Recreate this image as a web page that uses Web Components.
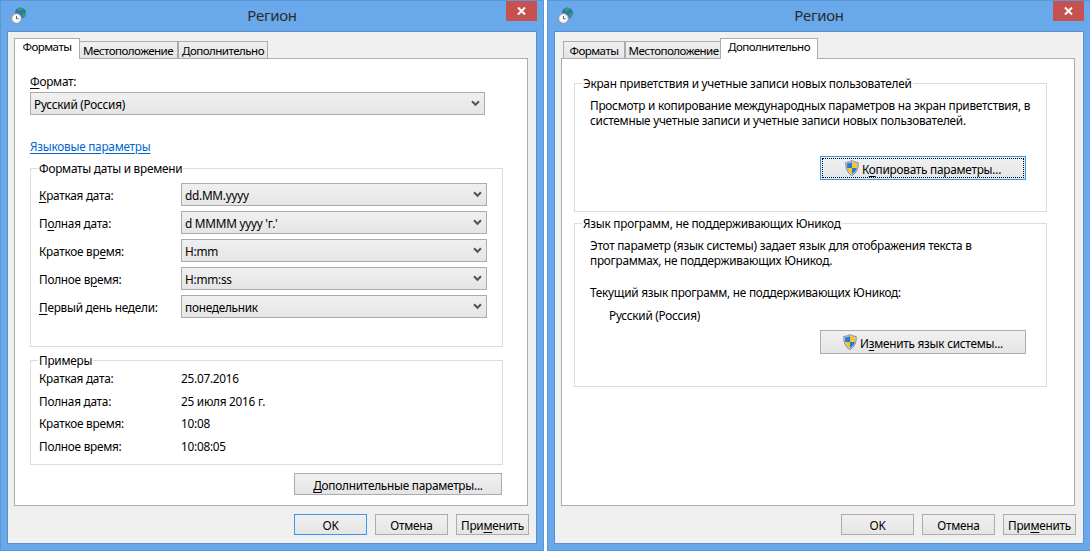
<!DOCTYPE html>
<html lang="ru">
<head>
<meta charset="utf-8">
<title>Регион</title>
<style>
  html, body { margin: 0; height: 551px; overflow: hidden; background: #fff; }
  body { font: 11.8px/16px "Noto Sans", "Open Sans", sans-serif; color: #000; letter-spacing: -0.25px; }
  #desk { display: flex; gap: 3px; width: 1091px; }
  .tight { line-height: 15px; white-space: nowrap; }
  u { text-underline-offset: 2px; }
</style>
</head>
<body>
<div id="desk">

  <region-window>
    <tab-strip slot="tabs">
      <tab-item active style="--w:62px">Форматы</tab-item>
      <tab-item style="--w:100px">Местоположение</tab-item>
      <tab-item style="--w:90px">Дополнительно</tab-item>
    </tab-strip>

    <tab-page style="--pad:14px 24px 0 15px">
      <field-label><u>Ф</u>ормат:</field-label>
      <combo-box style="margin:3px 18px 0 0">Русский (Россия)</combo-box>
      <link-label style="margin-top:22px">Языковые параметры</link-label>

      <group-box style="margin-top:6px">
        <span slot="legend">Форматы даты и времени</span>
        <form-grid style="--pad:7px 15px 28px 8px;--gap:5px;--row:23px">
          <field-label><u>К</u>раткая дата:</field-label><combo-box>dd.MM.yyyy</combo-box>
          <field-label>П<u>о</u>лная дата:</field-label><combo-box>d MMMM yyyy 'г.'</combo-box>
          <field-label>Краткое вр<u>е</u>мя:</field-label><combo-box>H:mm</combo-box>
          <field-label>Полное в<u>р</u>емя:</field-label><combo-box>H:mm:ss</combo-box>
          <field-label><u>П</u>ервый день недели:</field-label><combo-box>понедельник</combo-box>
        </form-grid>
      </group-box>

      <group-box style="margin-top:5px">
        <span slot="legend">Примеры</span>
        <form-grid style="--pad:0 15px 7px 8px;--gap:0;--row:22.5px;margin-top:-1px">
          <field-label>Краткая дата:</field-label><field-label>25.07.2016</field-label>
          <field-label>Полная дата:</field-label><field-label>25 июля 2016 г.</field-label>
          <field-label>Краткое время:</field-label><field-label>10:08</field-label>
          <field-label>Полное время:</field-label><field-label>10:08:05</field-label>
        </form-grid>
      </group-box>

      <button-row style="margin-top:8px;--end:1px">
        <win-button style="--w:208px;--h:22px"><u>Д</u>ополнительные параметры...</win-button>
      </button-row>
    </tab-page>

    <win-button slot="buttons" primary>OK</win-button>
    <win-button slot="buttons">Отмена</win-button>
    <win-button slot="buttons">При<u>м</u>енить</win-button>
  </region-window>

  <region-window>
    <tab-strip slot="tabs">
      <tab-item style="--w:62px">Форматы</tab-item>
      <tab-item style="--w:97px">Местоположение</tab-item>
      <tab-item active style="--w:94px">Дополнительно</tab-item>
    </tab-strip>

    <tab-page style="--pad:16px 27px 0 12px">
      <group-box>
        <span slot="legend">Экран приветствия и учетные записи новых пользователей</span>
        <text-block style="--pad:7px 20px 31px 15px">
          <div class="tight">Просмотр и копирование международных параметров на экран приветствия, в<br>системные учетные записи и учетные записи новых пользователей.</div>
          <button-row style="margin-top:28px">
            <win-button primary focused style="--w:206px;--h:24px"><shield-icon slot="icon"></shield-icon>К<u>о</u>пировать параметры...</win-button>
          </button-row>
        </text-block>
      </group-box>

      <group-box style="margin-top:3px">
        <span slot="legend">Язык программ, не поддерживающих Юникод</span>
        <text-block style="--pad:7px 20px 32px 15px">
          <div class="tight">Этот параметр (язык системы) задает язык для отображения текста в<br>программах, не поддерживающих Юникод.</div>
          <div class="tight" style="margin-top:17px">Текущий язык программ, не поддерживающих Юникод:</div>
          <div class="tight" style="margin:8px 0 0 19px">Русский (Россия)</div>
          <button-row style="margin-top:7px">
            <win-button style="--w:206px;--h:24px"><shield-icon slot="icon"></shield-icon>И<u>з</u>менить язык системы...</win-button>
          </button-row>
        </text-block>
      </group-box>
    </tab-page>

    <win-button slot="buttons">OK</win-button>
    <win-button slot="buttons">Отмена</win-button>
    <win-button slot="buttons">При<u>м</u>енить</win-button>
  </region-window>

</div>

<script>
function define(name, html) {
  const tpl = document.createElement("template");
  tpl.innerHTML = html;
  customElements.define(name, class extends HTMLElement {
    constructor() {
      super();
      this.attachShadow({ mode: "open" });
      this.shadowRoot.append(tpl.content.cloneNode(true));
    }
  });
}

// window frame, title bar and the OK / Cancel / Apply strip
define("region-window", `
  <style>
    :host { display: flex; flex-direction: column; box-sizing: border-box; flex: none;
      width: 544px; height: 551px; background: #69a8ea; border: 1px solid #5a97d8; }
    .title { display: grid; grid-template-columns: 1fr auto 1fr; height: 30px; flex: none; }
    .icon { margin: 6px 0 0 10px; display: block; }
    .caption { font-size: 15px; line-height: 29px; color: #2c2c2c; letter-spacing: -0.3px; }
    .close { justify-self: end; display: flex; align-items: center; justify-content: center;
      width: 31px; height: 20px; margin-right: 6px; background: #c75050; }
    .client { flex: 1; display: flex; flex-direction: column; min-height: 0; margin: 0 6px 6px;
      padding: 6px 7px 8px 6px; background: #f0f0f0; border: 1px solid #5a8fc9; }
    .buttons { display: flex; justify-content: flex-end; gap: 8px; margin-top: 8px; }
    ::slotted(tab-page) { flex: 1; margin-right: 1px; }
  </style>
  <div class="title">
    <svg class="icon" width="17" height="17" viewBox="0 0 17 17">
      <circle cx="9.500" cy="6" r="5.500" fill="#2f6fc4"/>
      <path d="M7 1.500c2-1 4-1 5.500.3-.3 1.200-1.400 1.500-2.400 1.500-.5 1-1.800 1.200-3 .8zM11.500 6c1.500-.6 2.700-.4 3.400.3-.2 1.800-1.200 3.400-2.600 4.200-.9-1.200-1.500-2.800-.8-4.500z" fill="#37a63f"/>
      <circle cx="5.500" cy="11.500" r="5" fill="#dfe3e6" stroke="#8f979c"/>
      <circle cx="5.500" cy="11.500" r="3.600" fill="#fbfbfb"/>
      <path d="M5.500 9v2.700h2.200" fill="none" stroke="#5a6166" stroke-width="1"/>
    </svg>
    <div class="caption">Регион</div>
    <div class="close">
      <svg width="9" height="8" viewBox="0 0 9 8"><path d="M1 .5 8 7.500M8 .5 1 7.500" stroke="#fff" stroke-width="2" fill="none"/></svg>
    </div>
  </div>
  <div class="client">
    <slot name="tabs"></slot>
    <slot></slot>
    <div class="buttons"><slot name="buttons"></slot></div>
  </div>
`);

define("tab-strip", `
  <style>
    :host { display: flex; align-items: flex-end; height: 21px; padding-left: 2px; margin-bottom: -1px;
      position: relative; z-index: 1; }
  </style>
  <slot></slot>
`);

define("tab-item", `
  <style>
    :host { display: block; box-sizing: border-box; width: var(--w); height: 18px; text-align: center;
      font-size: 11.6px; letter-spacing: -0.55px; line-height: 17px; white-space: nowrap;
      border: 1px solid #acacac; background: linear-gradient(#f0f0f0, #e5e5e5); }
    :host([active]) { position: relative; z-index: 1; height: 21px; width: calc(var(--w) + 4px);
      margin: 0 -2px; line-height: 16px; border-bottom: 0; background: #fff; }
  </style>
  <slot></slot>
`);

define("tab-page", `
  <style>
    :host { display: block; box-sizing: border-box; padding: var(--pad); background: #fff;
      border: 1px solid #acacac; }
  </style>
  <slot></slot>
`);

define("field-label", `
  <style>
    :host { display: block; white-space: nowrap; align-self: center; }
  </style>
  <slot></slot>
`);

define("link-label", `
  <style>
    :host { display: block; padding-top: 1px; color: #0066cc; text-decoration: underline; text-underline-offset: 2px; }
  </style>
  <slot></slot>
`);

define("combo-box", `
  <style>
    :host { display: flex; align-items: center; justify-content: space-between; box-sizing: border-box;
      height: 23px; padding: 1px 4px 0 3px; white-space: nowrap; border: 1px solid #acacac;
      background: linear-gradient(#f0f0f0, #e5e5e5); }
    svg { display: block; flex: none; margin-top: -1px; }
  </style>
  <span><slot></slot></span>
  <svg width="9" height="7" viewBox="0 0 9 7"><path d="M1 1.200 4.500 4.800 8 1.200" fill="none" stroke="#555" stroke-width="2"/></svg>
`);

define("group-box", `
  <style>
    :host { display: block; }
    fieldset { margin: 0; padding: 0; min-width: 0; border: 1px solid #dcdcdc; }
    legend { margin-left: 7px; padding: 0 1px; line-height: 16px; white-space: nowrap; }
  </style>
  <fieldset><legend><slot name="legend"></slot></legend><slot></slot></fieldset>
`);

define("form-grid", `
  <style>
    :host { display: grid; grid-template-columns: 142px 1fr; grid-auto-rows: var(--row);
      row-gap: var(--gap); padding: var(--pad); }
  </style>
  <slot></slot>
`);

define("text-block", `
  <style>
    :host { display: block; padding: var(--pad); }
  </style>
  <slot></slot>
`);

define("button-row", `
  <style>
    :host { display: flex; justify-content: flex-end; padding-right: var(--end, 0); }
  </style>
  <slot></slot>
`);

define("win-button", `
  <style>
    :host { display: flex; align-items: center; justify-content: center; gap: 3px; box-sizing: border-box;
      width: var(--w, 73px); height: var(--h, 21px); padding-top: 1px; white-space: nowrap;
      border: 1px solid #acacac; background: linear-gradient(#f0f0f0, #e5e5e5); position: relative; }
    :host([primary]) { border-color: #3c96ea; }
    .dots { display: none; position: absolute; inset: 1px; border: 1px dotted #000; pointer-events: none; }
    :host([focused]) .dots { display: block; }
  </style>
  <div class="dots"></div>
  <slot name="icon"></slot>
  <span><slot></slot></span>
`);

define("shield-icon", `
  <style>
    :host { display: block; width: 14px; height: 16px; flex: none; margin-top: -1px; }
    svg { display: block; }
  </style>
  <svg width="14" height="16" viewBox="0 0 14 16">
    <path d="M7 .5c1.800 1.200 3.800 1.800 6.200 2 .3 5.500-1.500 10.500-6.200 13C2.300 13 .5 8 .8 2.500 3.200 2.300 5.200 1.700 7 .5z" fill="#c9ced3" stroke="#7f8a94"/>
    <path d="M7 2.300V8H2.200C2 6.500 2 5.300 2.100 3.600 4 3.400 5.600 3 7 2.300z" fill="#2a78d6"/>
    <path d="M7 2.300c1.400.7 3 1.100 4.900 1.300.1 1.700.1 2.900-.1 4.400H7z" fill="#f6c627"/>
    <path d="M2.200 8H7v5.900C4.400 12.500 2.800 10.600 2.200 8z" fill="#f6c627"/>
    <path d="M7 8h4.800c-.6 2.600-2.200 4.500-4.800 5.900z" fill="#2a78d6"/>
  </svg>
`);
</script>
</body>
</html>
